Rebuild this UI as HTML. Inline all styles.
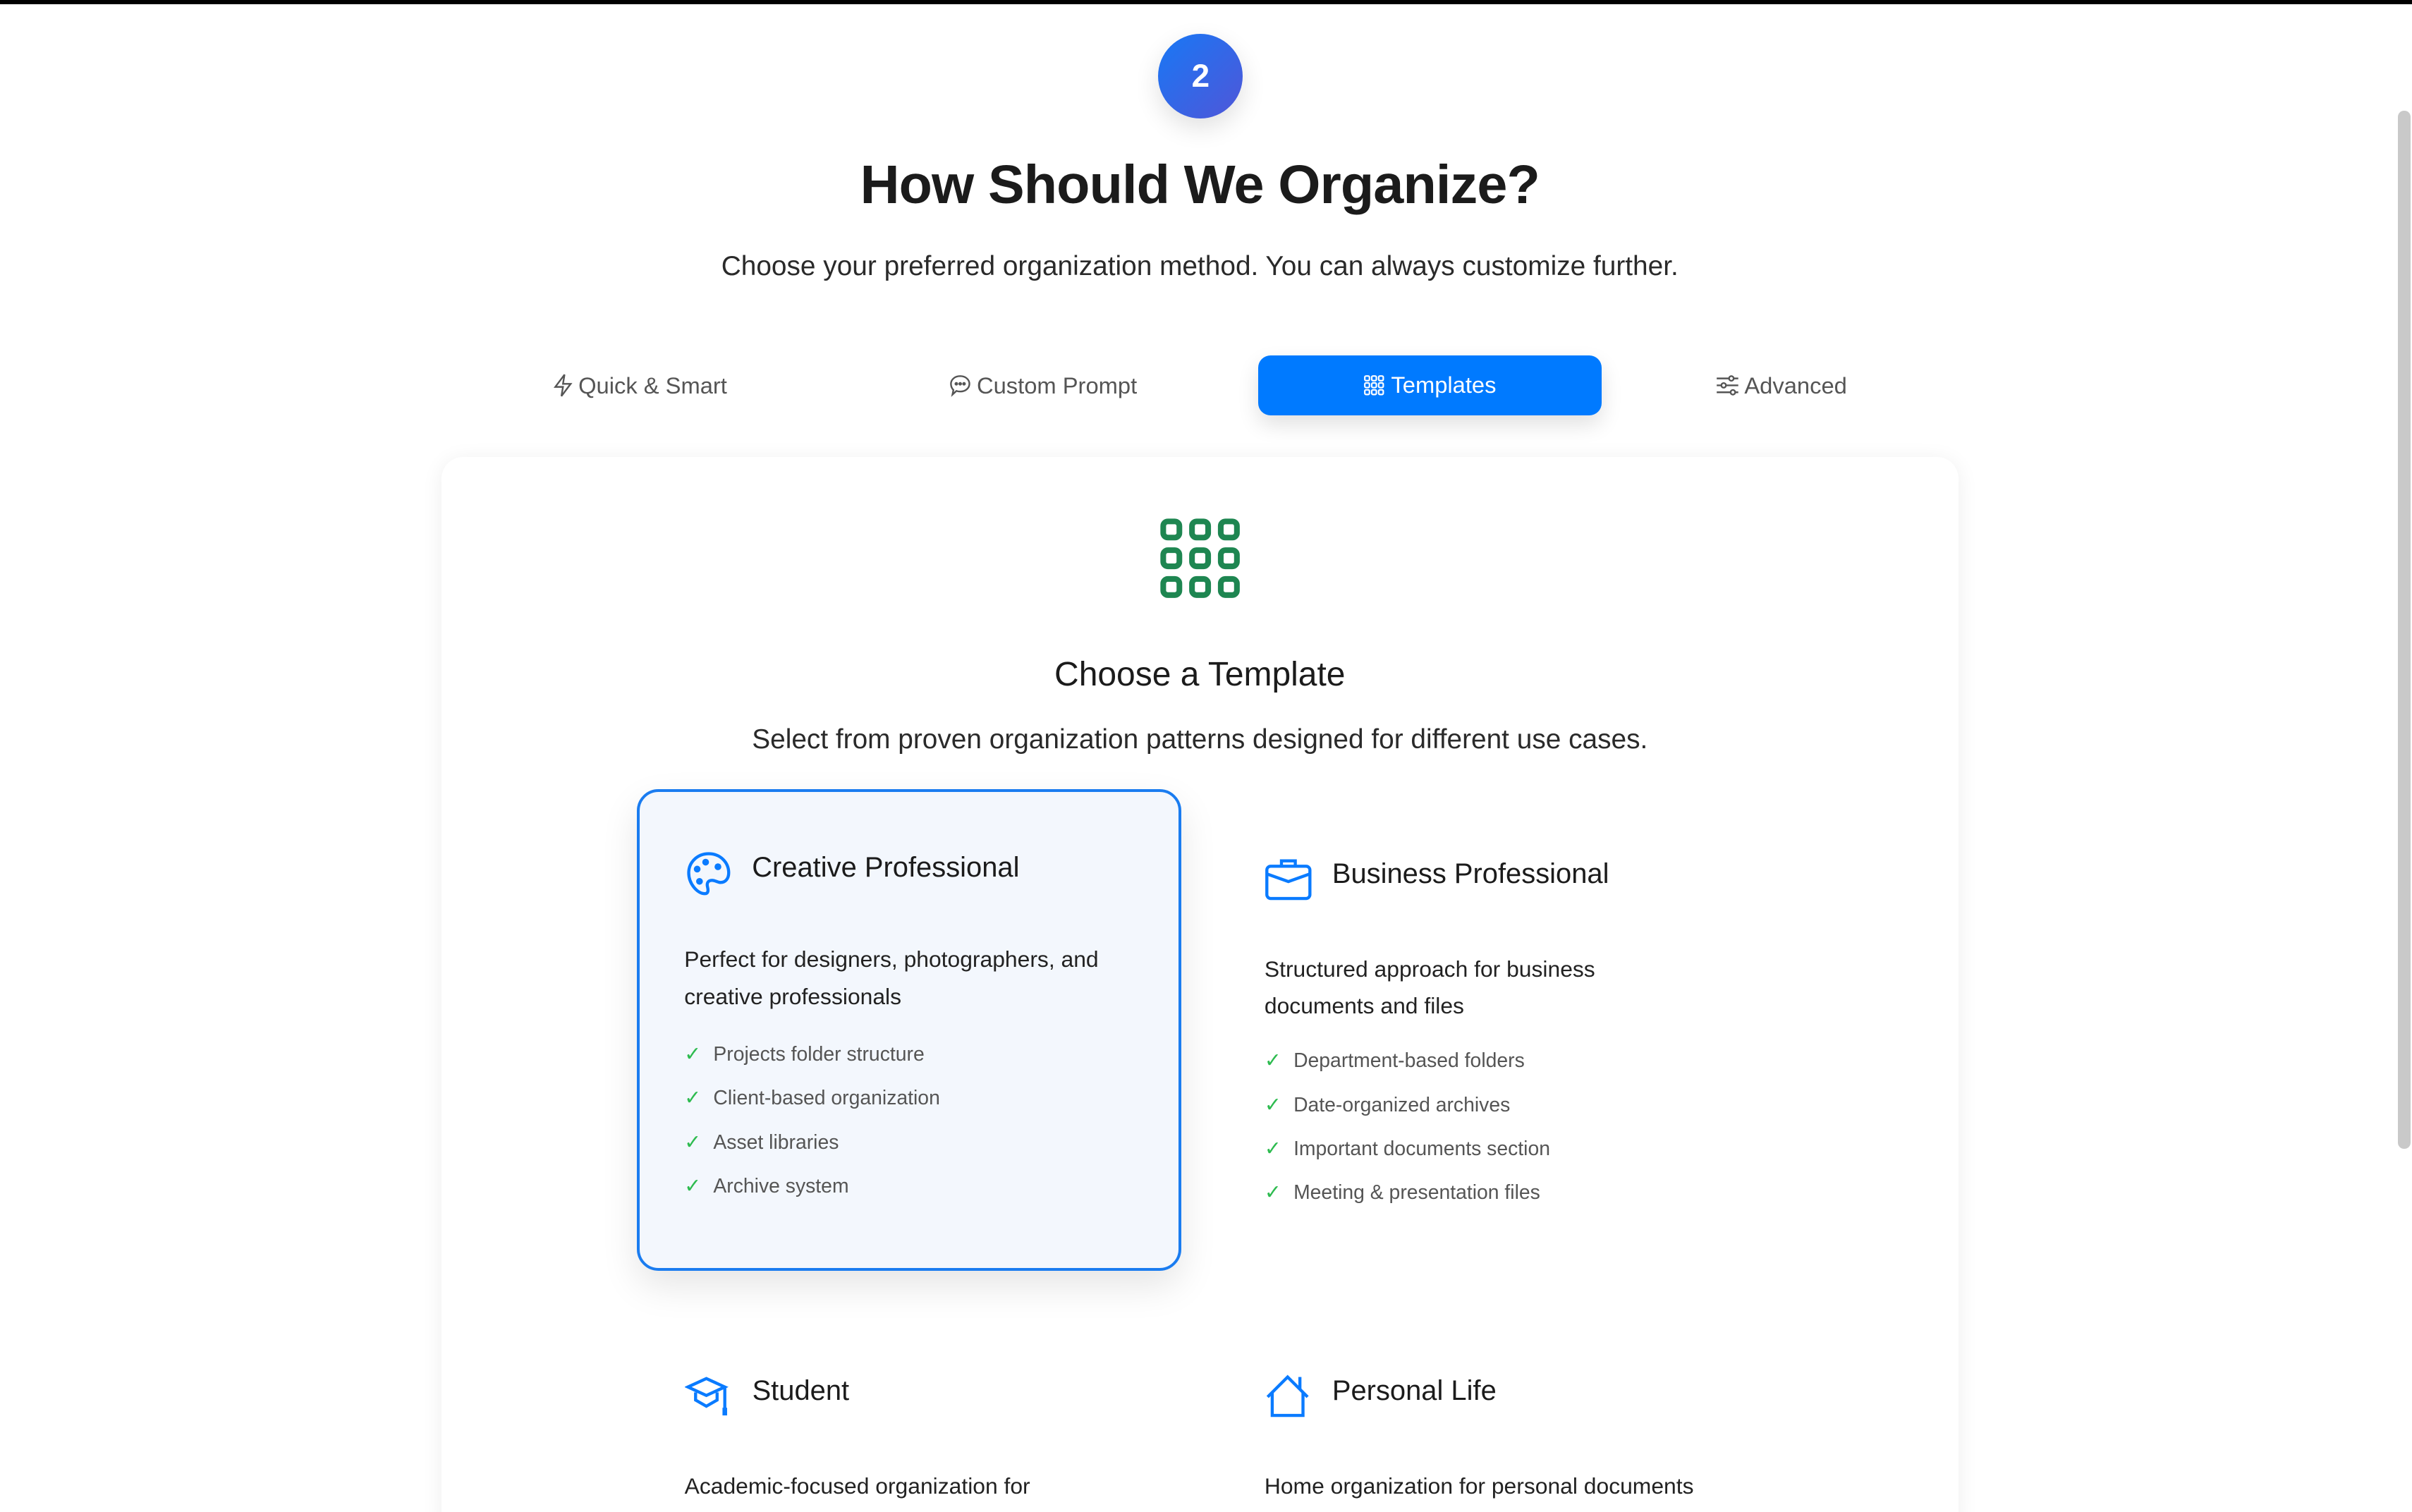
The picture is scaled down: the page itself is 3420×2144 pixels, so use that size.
<!DOCTYPE html>
<html><head><meta charset="utf-8"><style>
html,body{margin:0;padding:0;}
body{width:3420px;height:2144px;overflow:hidden;background:#fff;font-family:"Liberation Sans",sans-serif;position:relative;}
#z{zoom:2.18112;width:1568px;height:983px;position:relative;overflow:hidden;}
.a{position:absolute;}
.topbar{left:0;top:0;width:1568px;height:2.6px;background:#000;}
.circ{left:753px;top:22px;width:55px;height:55px;border-radius:50%;background:linear-gradient(135deg,#1878f5,#5056d8);box-shadow:0 6px 16px rgba(0,0,0,0.12);color:#fff;font-weight:bold;font-size:21px;text-align:center;line-height:55px;}
h1{position:absolute;left:0;width:1560px;text-align:center;top:100px;margin:0;font-size:35.5px;font-weight:bold;color:#1b1b1b;letter-spacing:-0.4px;}
.sub{left:0;width:1560px;text-align:center;top:163px;font-size:17.8px;color:#2a2a2a;}
.tab{top:242px;font-size:15px;color:#555;display:flex;align-items:center;gap:3px;}
.tbtn{left:818px;top:231px;width:223px;height:39px;border-radius:8px;background:#007aff;color:#fff;font-size:15px;display:flex;align-items:center;justify-content:center;gap:4px;box-shadow:0 6px 14px rgba(0,0,0,0.12);}
.panel{left:287px;top:297px;width:986px;height:700px;background:#fff;border-radius:14px;box-shadow:0 2px 14px rgba(0,0,0,0.07);}
.h2{left:0;width:1560px;text-align:center;top:426px;font-size:22px;color:#1b1b1b;}
.d2{left:0;width:1560px;text-align:center;top:471px;font-size:17.8px;color:#2a2a2a;}
.card{position:absolute;width:354px;height:313px;box-sizing:border-box;}
.sel{left:414px;top:513px;background:#f3f7fd;border:2px solid #1a7cf0;border-radius:14px;box-shadow:0 10px 24px rgba(0,0,0,0.10);}
.ct{position:absolute;left:73px;top:39px;font-size:18.3px;color:#1b1b1b;}
.ic{position:absolute;left:29px;top:37px;}
.cd{position:absolute;left:29px;top:97px;width:290px;font-size:14.6px;line-height:24px;color:#222;}
.nc .cd{top:99px;}
.ul{position:absolute;left:29px;top:161px;font-size:13px;color:#555;}
.ul div{height:28.6px;line-height:20px;}
.ul span{color:#2dbb4f;font-size:13px;margin-right:8px;}
.sb{left:1559px;top:72px;width:8px;height:675px;border-radius:4px;background:#c9c9c9;}
</style></head><body><div id="z">
<div class="a topbar"></div>
<div class="a circ">2</div>
<h1>How Should We Organize?</h1>
<div class="a sub">Choose your preferred organization method. You can always customize further.</div>

<div class="a tab" style="left:359px"><svg width="14" height="16" viewBox="0 0 14 16" fill="none" stroke="#555" stroke-width="1.1"><path d="M8 1L2 9h5l-1 6 6-8H7z"/></svg>Quick &amp; Smart</div>
<div class="a tab" style="left:616px"><svg width="16" height="16" viewBox="0 0 16 16" fill="none" stroke="#555" stroke-width="1.1"><path d="M8 2c3.6 0 6 2.3 6 5s-2.4 5-6 5c-.9 0-1.7-.1-2.4-.4L3 14l.6-3C2.6 10 2 8.6 2 7c0-2.7 2.4-5 6-5z"/><circle cx="5.5" cy="7" r=".6" fill="#555"/><circle cx="8" cy="7" r=".6" fill="#555"/><circle cx="10.5" cy="7" r=".6" fill="#555"/></svg>Custom Prompt</div>
<div class="a tbtn"><svg width="14" height="14" viewBox="0 0 14 14" fill="none" stroke="#fff" stroke-width="1"><rect x="1" y="1" width="3" height="3" rx=".8"/><rect x="5.5" y="1" width="3" height="3" rx=".8"/><rect x="10" y="1" width="3" height="3" rx=".8"/><rect x="1" y="5.5" width="3" height="3" rx=".8"/><rect x="5.5" y="5.5" width="3" height="3" rx=".8"/><rect x="10" y="5.5" width="3" height="3" rx=".8"/><rect x="1" y="10" width="3" height="3" rx=".8"/><rect x="5.5" y="10" width="3" height="3" rx=".8"/><rect x="10" y="10" width="3" height="3" rx=".8"/></svg>Templates</div>
<div class="a tab" style="left:1115px"><svg width="16" height="16" viewBox="0 0 16 16" fill="none" stroke="#555" stroke-width="1.1"><path d="M1 3.5h8M12 3.5h3M1 8h3M7 8h8M1 12.5h9M13 12.5h2"/><circle cx="10.5" cy="3.5" r="1.5"/><circle cx="5.5" cy="8" r="1.5"/><circle cx="11.5" cy="12.5" r="1.5"/></svg>Advanced</div>

<div class="a panel"></div>
<svg class="a" style="left:754px;top:337px" width="52" height="52" viewBox="0 0 52 52" fill="none" stroke="#1e8651" stroke-width="3.7">
<g><rect x="2" y="2" width="10.5" height="10.5" rx="3"/><rect x="20.7" y="2" width="10.5" height="10.5" rx="3"/><rect x="39.4" y="2" width="10.5" height="10.5" rx="3"/>
<rect x="2" y="20.7" width="10.5" height="10.5" rx="3"/><rect x="20.7" y="20.7" width="10.5" height="10.5" rx="3"/><rect x="39.4" y="20.7" width="10.5" height="10.5" rx="3"/>
<rect x="2" y="39.4" width="10.5" height="10.5" rx="3"/><rect x="20.7" y="39.4" width="10.5" height="10.5" rx="3"/><rect x="39.4" y="39.4" width="10.5" height="10.5" rx="3"/></g></svg>
<div class="a h2">Choose a Template</div>
<div class="a d2">Select from proven organization patterns designed for different use cases.</div>

<div class="card sel">
<svg class="ic" width="32" height="32" viewBox="0 0 32 32" fill="none" stroke="#0a7bff" stroke-width="2"><path d="M16 3C8.5 3 3 8.6 3 15.5 3 22.4 8.5 29 13.5 29c2.5 0 2.2-2.5 1.7-4.5-.6-2.5.4-4.2 3-4.2 2 0 3.6 1.4 5.5 1.4 3.2 0 5.3-2.5 5.3-6.2C29 8.6 23.5 3 16 3z"/><g fill="#0a7bff" stroke="none"><circle cx="14" cy="8.5" r="2.2"/><circle cx="22" cy="11.5" r="2.2"/><circle cx="8.5" cy="13" r="2.2"/><circle cx="10" cy="21" r="2.2"/></g></svg>
<div class="ct">Creative Professional</div>
<div class="cd">Perfect for designers, photographers, and creative professionals</div>
<div class="ul"><div><span>✓</span>Projects folder structure</div><div><span>✓</span>Client-based organization</div><div><span>✓</span>Asset libraries</div><div><span>✓</span>Archive system</div></div>
</div>

<div class="card nc" style="left:793px;top:519px">
<svg class="ic" width="32" height="32" viewBox="0 0 32 32" fill="none" stroke="#0a7bff" stroke-width="2"><rect x="1.5" y="7" width="28" height="21" rx="2.5"/><path d="M11 7V3.5h9V7M1.5 12l14 5 14-5"/></svg>
<div class="ct">Business Professional</div>
<div class="cd" style="width:240px">Structured approach for business documents and files</div>
<div class="ul"><div><span>✓</span>Department-based folders</div><div><span>✓</span>Date-organized archives</div><div><span>✓</span>Important documents section</div><div><span>✓</span>Meeting &amp; presentation files</div></div>
</div>

<div class="card nc" style="left:416px;top:855px">
<svg class="ic" width="32" height="32" viewBox="0 0 32 32" fill="none" stroke="#0a7bff" stroke-width="2"><path d="M2 9.5L14 4l12 5.5L14 15z"/><path d="M7 13v5l7 4 7-4v-5"/><path d="M26 9.5v14"/><rect x="24.5" y="23" width="3" height="5" fill="#0a7bff" stroke="none"/></svg>
<div class="ct">Student</div>
<div class="cd" style="width:245px">Academic-focused organization for students and researchers</div>
</div>

<div class="card nc" style="left:793px;top:855px">
<svg class="ic" width="32" height="32" viewBox="0 0 32 32" fill="none" stroke="#0a7bff" stroke-width="2"><path d="M2 16L15 3l13 13"/><path d="M5 13v15h20V13"/><path d="M23 3v8"/></svg>
<div class="ct">Personal Life</div>
<div class="cd" style="width:295px">Home organization for personal documents and media</div>
</div>

<div class="a sb"></div>
</div></body></html>
